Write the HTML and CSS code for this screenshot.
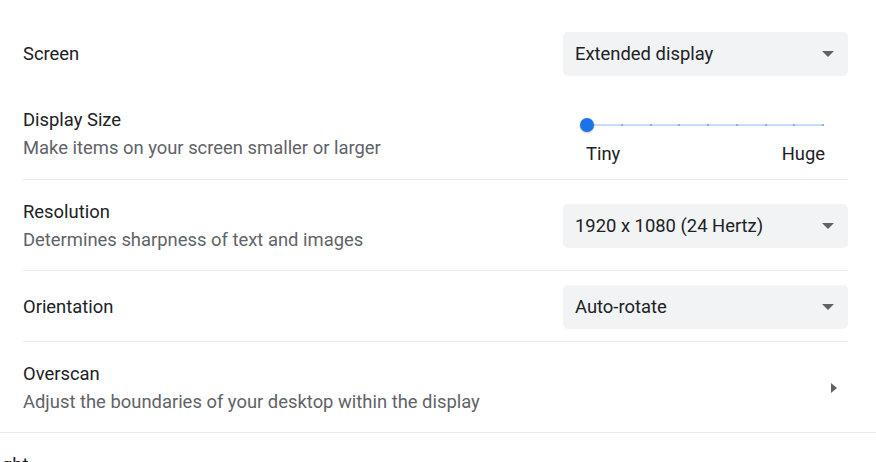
FILE: index.html
```html
<!DOCTYPE html>
<html>
<head>
<meta charset="utf-8">
<link rel="stylesheet" href="styles.css">
</head>
<body>
<div class="page">
  <div class="section">
    <div class="row single">
      <div class="labels"><div class="title">Screen</div></div>
      <div class="select"><span>Extended display</span><span class="caret"></span></div>
    </div>
    <div class="row double">
      <div class="labels">
        <div class="title">Display Size</div>
        <div class="sub">Make items on your screen smaller or larger</div>
      </div>
      <div class="slider">
        <div class="track">
          <span class="knob"></span>
          <span class="dot"></span><span class="dot"></span><span class="dot"></span><span class="dot"></span>
          <span class="dot"></span><span class="dot"></span><span class="dot"></span><span class="dot"></span>
        </div>
        <div class="ends"><span>Tiny</span><span>Huge</span></div>
      </div>
    </div>
    <div class="row double bordered">
      <div class="labels">
        <div class="title">Resolution</div>
        <div class="sub">Determines sharpness of text and images</div>
      </div>
      <div class="select"><span>1920 x 1080 (24 Hertz)</span><span class="caret"></span></div>
    </div>
    <div class="row single bordered">
      <div class="labels"><div class="title">Orientation</div></div>
      <div class="select"><span>Auto-rotate</span><span class="caret"></span></div>
    </div>
    <div class="row double bordered">
      <div class="labels">
        <div class="title">Overscan</div>
        <div class="sub">Adjust the boundaries of your desktop within the display</div>
      </div>
      <span class="arrow"></span>
    </div>
  </div>
  <div class="next">ght</div>
</div>
</body>
</html>
```
FILE: styles.css
```css
html, body {
  margin: 0;
  padding: 0;
  background: #ffffff;
  overflow: hidden;
}
body {
  font-family: Roboto, "Liberation Sans", Arial, sans-serif;
  font-size: 18.4px;
  line-height: 28px;
  color: #202124;
}
.page {
  width: 876px;
  height: 462px;
  overflow: hidden;
}
.section {
  padding: 19px 0 0 0;
  border-bottom: 1px solid #ebebeb;
}
.row {
  margin: 0 28px 0 23px;
  display: flex;
  align-items: center;
  justify-content: space-between;
  box-sizing: border-box;
}
.row.single { height: 70px; }
.row.double { height: 90px; }
.row.bordered {
  border-top: 1px solid #ebebeb;
  padding-top: 2px;
}
.row.bordered.double { height: 91px; }
.row.bordered.single { height: 71px; }
.row:last-child { height: 90px; }
.title { color: #202124; }
.sub { color: #5f6368; }
.select {
  width: 285px;
  height: 44px;
  box-sizing: border-box;
  background: #f1f3f4;
  border-radius: 5px;
  display: flex;
  align-items: center;
  justify-content: space-between;
  padding: 0 14px 0 12px;
  color: #202124;
}
.caret {
  width: 0;
  height: 0;
  border-left: 6px solid transparent;
  border-right: 6px solid transparent;
  border-top: 6px solid #5f6368;
}
.slider {
  width: 239px;
  margin-right: 23px;
  padding-top: 24px;
}
.track {
  margin-left: 1px;
  margin-right: 1px;
  height: 2px;
  background: #c6dafc;
  display: flex;
  justify-content: space-between;
  align-items: center;
}
.knob {
  width: 14px;
  height: 14px;
  border-radius: 50%;
  background: #1a73e8;
  margin-left: -7px;
  box-shadow: 0 1px 2px rgba(0,0,0,0.25);
}
.dot {
  width: 2px;
  height: 2px;
  border-radius: 50%;
  background: #6fa3f0;
}
.ends {
  display: flex;
  justify-content: space-between;
  margin-top: 14px;
  color: #202124;
}
.arrow {
  width: 0;
  height: 0;
  border-top: 5px solid transparent;
  border-bottom: 5px solid transparent;
  border-left: 6px solid #5f6368;
  margin-right: 11px;
}
.next {
  padding: 18px 0 0 2px;
  color: #202124;
}
```
